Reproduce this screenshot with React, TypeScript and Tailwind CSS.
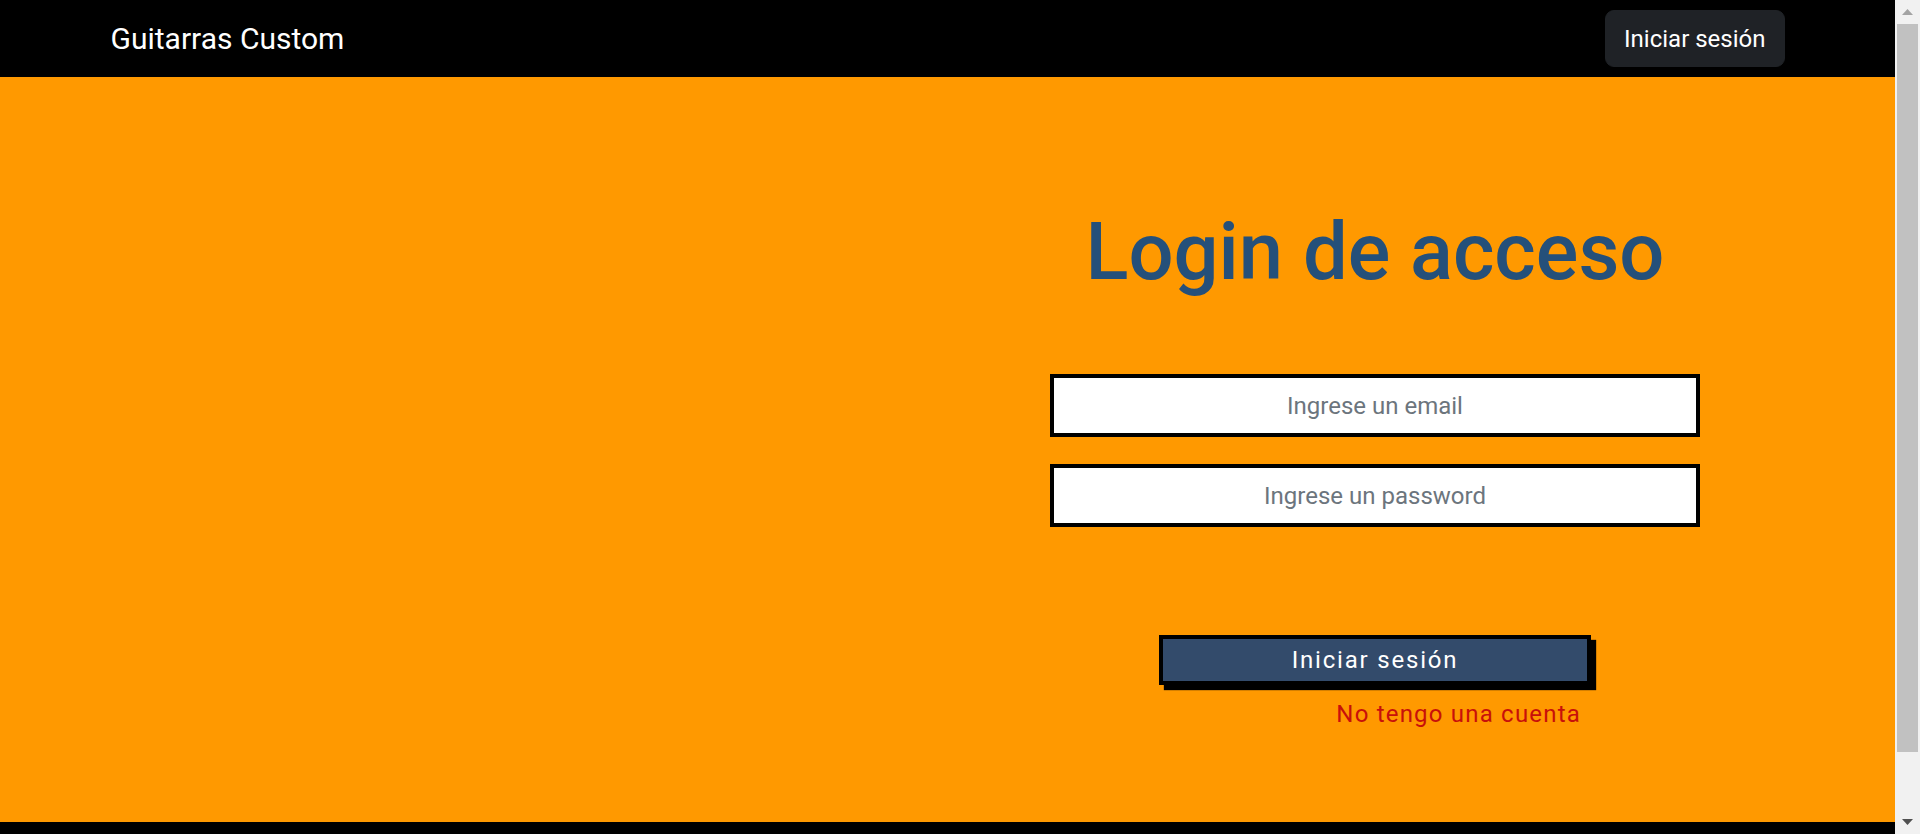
import React from "react";

function ScrollBar() {
  return (
    <div className="flex h-full w-[25px] shrink-0 flex-col bg-[#f1f1f1]">
      <div className="flex h-[24px] items-center justify-center">
        <svg width="11" height="6" viewBox="0 0 11 6">
          <polygon points="5.5,0 11,6 0,6" fill="#a3a3a3" />
        </svg>
      </div>
      <div className="mx-[2px] h-[728px] bg-[#c1c1c1]" />
      <div className="flex-1" />
      <div className="flex h-[24px] items-center justify-center">
        <svg width="11" height="6" viewBox="0 0 11 6">
          <polygon points="0,0 11,0 5.5,6" fill="#505050" />
        </svg>
      </div>
    </div>
  );
}

export default function App() {
  return (
    <div className="flex h-[834px] w-[1920px] overflow-hidden font-['Roboto','Liberation_Sans',sans-serif]">
      <div className="flex w-[1895px] shrink-0 flex-col">
        {/* Navbar */}
        <nav className="h-[77px] shrink-0 bg-black">
          <div className="mx-[92.5px] flex h-full items-center justify-between px-[18px]">
            <span className="text-[30px] leading-[45px] text-white">Guitarras Custom</span>
            <button className="h-[57px] rounded-[9px] border-[1.5px] border-[#1f2226] bg-[#1f2226] px-[18px] text-[24px] leading-[36px] text-white">
              Iniciar sesión
            </button>
          </div>
        </nav>

        {/* Login */}
        <main className="h-[745px] shrink-0 bg-[#ff9900]">
          <div className="mx-[92.5px] grid grid-cols-2">
            <div />
            <div className="flex flex-col items-center pt-[127px]">
              <h1 className="text-[79.5px] font-medium leading-[95px] text-[#25507a]">Login de acceso</h1>
              <input
                type="email"
                placeholder="Ingrese un email"
                className="mt-[75px] h-[63px] w-[650px] border-4 border-black bg-white text-center text-[24px] text-[#212529] outline-none placeholder:text-[#6c757d]"
              />
              <input
                type="password"
                placeholder="Ingrese un password"
                className="mt-[27px] h-[63px] w-[650px] border-4 border-black bg-white text-center text-[24px] text-[#212529] outline-none placeholder:text-[#6c757d]"
              />
              <div className="mt-[108px] flex w-[432px] flex-col">
                <button className="h-[50px] w-full border-4 border-black bg-[#334b6b] text-[24px] leading-[36px] tracking-[1.8px] text-white shadow-[5px_5px_1px_#000]">
                  Iniciar sesión
                </button>
                <a className="mt-[11px] pr-[10px] text-right text-[24px] leading-[36px] tracking-[1.2px] text-[#c8100a]">
                  No tengo una cuenta
                </a>
              </div>
            </div>
          </div>
        </main>

        <footer className="h-[113px] shrink-0 bg-black" />
      </div>
      <ScrollBar />
    </div>
  );
}
